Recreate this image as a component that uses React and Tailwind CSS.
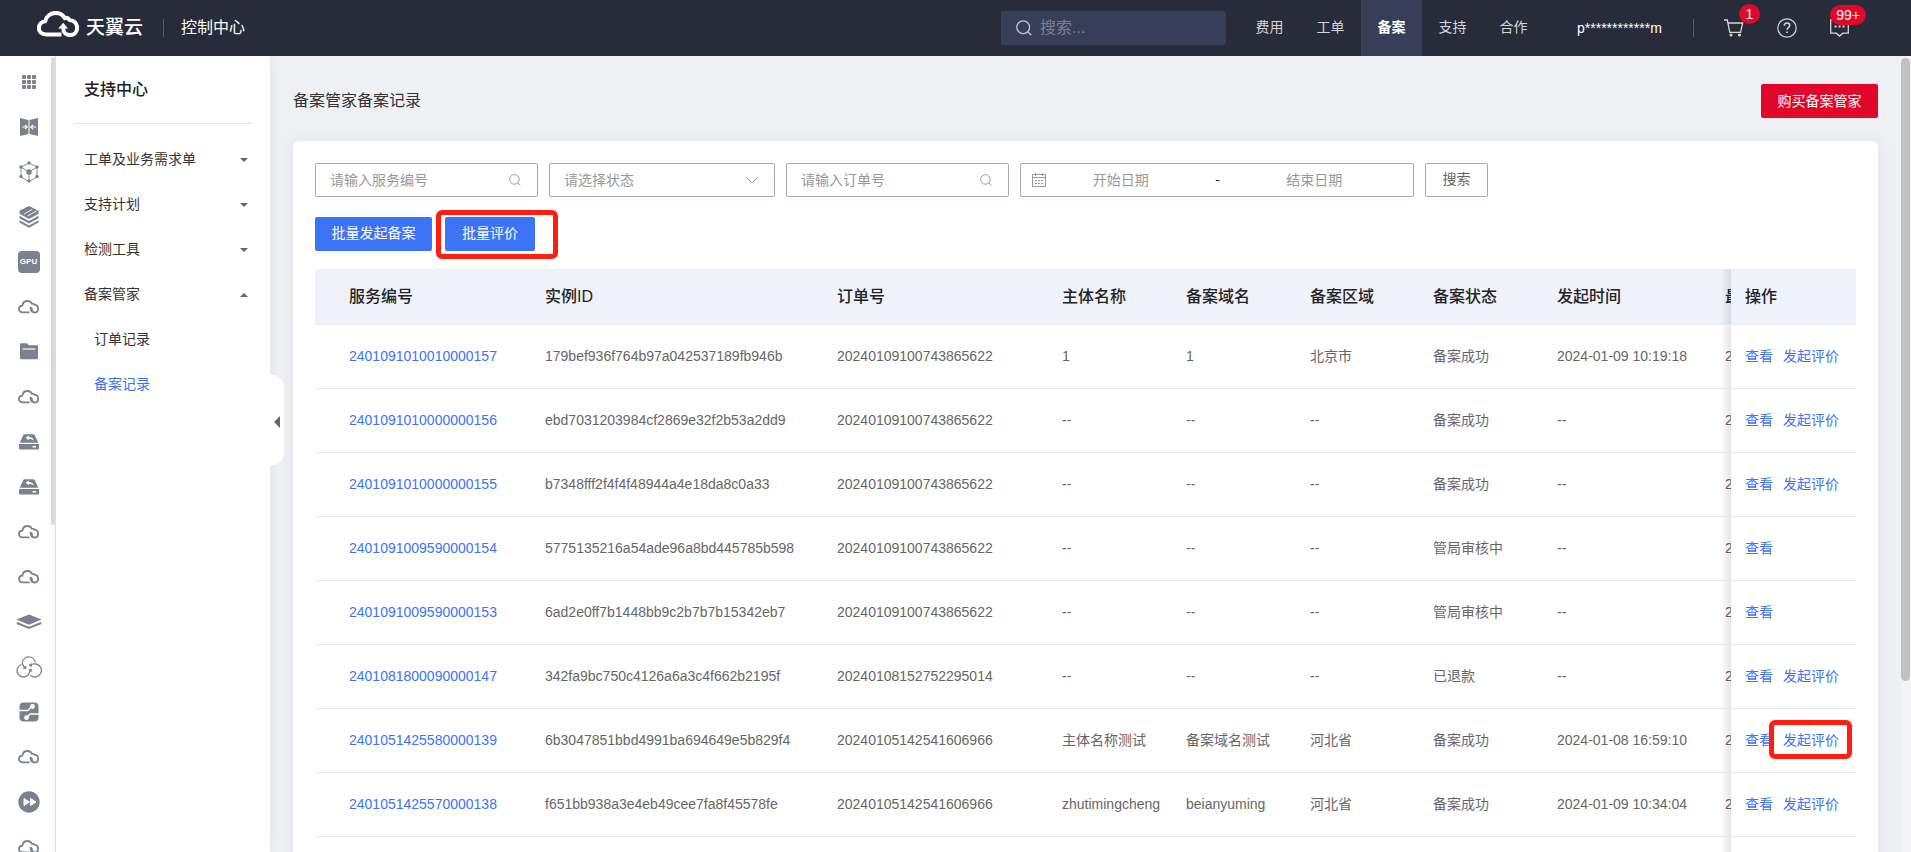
import React from "react";

const navItems = ["费用", "工单", "备案", "支持", "合作"];

const menuItems = ["工单及业务需求单", "支持计划", "检测工具"];

const columns = [
  { title: "服务编号", width: "w-[216px]", pad: "pl-[34px]" },
  { title: "实例ID", width: "w-[292px]", pad: "pl-3.5" },
  { title: "订单号", width: "w-[225px]", pad: "pl-3.5" },
  { title: "主体名称", width: "w-[124px]", pad: "pl-3.5" },
  { title: "备案域名", width: "w-[124px]", pad: "pl-3.5" },
  { title: "备案区域", width: "w-[123px]", pad: "pl-3.5" },
  { title: "备案状态", width: "w-[124px]", pad: "pl-3.5" },
  { title: "发起时间", width: "w-[168px]", pad: "pl-3.5" },
  { title: "最", width: "w-5", pad: "pl-3.5" },
];

const rows = [
  ["2401091010010000157", "179bef936f764b97a042537189fb946b", "20240109100743865622", "1", "1", "北京市", "备案成功", "2024-01-09 10:19:18", "2"],
  ["2401091010000000156", "ebd7031203984cf2869e32f2b53a2dd9", "20240109100743865622", "--", "--", "--", "备案成功", "--", "2"],
  ["2401091010000000155", "b7348fff2f4f4f48944a4e18da8c0a33", "20240109100743865622", "--", "--", "--", "备案成功", "--", "2"],
  ["2401091009590000154", "5775135216a54ade96a8bd445785b598", "20240109100743865622", "--", "--", "--", "管局审核中", "--", "2"],
  ["2401091009590000153", "6ad2e0ff7b1448bb9c2b7b7b15342eb7", "20240109100743865622", "--", "--", "--", "管局审核中", "--", "2"],
  ["2401081800090000147", "342fa9bc750c4126a6a3c4f662b2195f", "20240108152752295014", "--", "--", "--", "已退款", "--", "2"],
  ["2401051425580000139", "6b3047851bbd4991ba694649e5b829f4", "20240105142541606966", "主体名称测试", "备案域名测试", "河北省", "备案成功", "2024-01-08 16:59:10", "2"],
  ["2401051425570000138", "f651bb938a3e4eb49cee7fa8f45578fe", "20240105142541606966", "zhutimingcheng", "beianyuming", "河北省", "备案成功", "2024-01-09 10:34:04", "2"],
];

const CloudLogo = ({ className }) => (
  <svg viewBox="0 0 42 26" className={className} fill="none" aria-hidden="true">
    <path
      d="M24.5 23.4H9C4.7 23.4 1.9 20.6 1.9 17c0-3.8 2.7-6.4 6.3-6.8C9.3 5.3 13.6 1.9 18.8 1.9c4 0 7.200 1.900 9 5.300 1.300-.5 3.400-.3 4.700 1.700 4.700.4 7.600 3.600 7.600 7.900 0 4.200-3 7.300-7 7.300-4.400 0-6.900-3-6.900-6.900v-1"
      stroke="currentColor"
      strokeWidth="4"
      strokeLinejoin="round"
    />
    <path d="M26.200 11.800 31 17.600h-9.800z" fill="currentColor" />
  </svg>
);

const SmallCloud = () => (
  <svg width="21" height="14" viewBox="0 0 21 14" fill="none" aria-hidden="true">
    <path
      d="M11.600 12.300H4.600C2.400 12.300 1 10.800 1 9c0-2 1.500-3.300 3.300-3.400C4.800 2.900 6.800 1 9.400 1c2 0 3.600 1 4.400 2.700 1.600-.1 2.300.3 2.700 1 2.200.2 3.600 1.800 3.600 4 0 2.300-1.500 3.800-3.600 3.800-2.200 0-3.300-1.300-3.300-3.200"
      stroke="currentColor"
      strokeWidth="1.800"
    />
    <path d="M11.500 7.200c1.200-.6 2.600-.2 3 .8.300 1 .1 2 .9 3.200l-1.600 1c-1.400-1-2-2.700-2.300-5z" fill="currentColor" />
  </svg>
);

const GridIcon = () => (
  <svg width="14" height="14" viewBox="0 0 14 14" fill="currentColor" aria-hidden="true">
    {[0, 5, 10].map((y) =>
      [0, 5, 10].map((x) => <rect key={`${x}-${y}`} x={x} y={y} width="4" height="4" rx="1" />)
    )}
  </svg>
);

const DoorIcon = () => (
  <svg width="18" height="18" viewBox="0 0 18 18" aria-hidden="true">
    <path d="M0 0l8.500 2v14L0 18zM18 0L9.500 2v14l8.500 2z" fill="currentColor" />
    <path
      d="M2 9h5M5 6.800 7.200 9 5 11.200M16 9h-5M13 6.800 10.800 9l2.200 2.200"
      stroke="white"
      strokeWidth="1.200"
      fill="none"
    />
  </svg>
);

const CubeIcon = () => (
  <svg width="20" height="22" viewBox="0 0 20 22" aria-hidden="true">
    <path
      d="M10 2 18 6v10l-8 4.500L2 16V6zM2 6l8 5 8-5M10 11v9"
      stroke="currentColor"
      strokeWidth="0.900"
      fill="none"
    />
    <g fill="currentColor">
      <circle cx="10" cy="11" r="2.700" />
      <circle cx="10" cy="2" r="1.700" />
      <circle cx="10" cy="20" r="1.700" />
      <circle cx="2" cy="6" r="1.700" />
      <circle cx="18" cy="6" r="1.700" />
      <circle cx="2" cy="15.500" r="1.700" />
      <circle cx="18" cy="15.500" r="1.700" />
    </g>
  </svg>
);

const StackIcon = () => (
  <svg width="20" height="22" viewBox="0 0 20 22" aria-hidden="true">
    <path d="M10 0l9.500 4.800v3L10 13 .5 7.800v-3z" fill="currentColor" />
    <path d="M5 8l8-4.500M8.500 10l9-5" stroke="white" strokeWidth="0.900" />
    <path d="M.5 9.800l9.500 5.200 9.500-5.200v2.500L10 17.500.5 12.300zM.5 14.200l9.500 5.200 9.500-5.200v2.200L10 21.700.5 16.400z" fill="currentColor" />
  </svg>
);

const GpuIcon = () => (
  <span className="flex h-[22px] w-[22px] items-center justify-center rounded bg-[#7c818e] text-[8px] font-bold text-white">
    GPU
  </span>
);

const FolderIcon = () => (
  <svg width="18" height="17" viewBox="0 0 18 17" aria-hidden="true">
    <path d="M0 1.500C0 .7.500.3 1.200.3h5.600l2 2H17c.7 0 1 .4 1 1V15c0 .8-.4 1.200-1.100 1.200H1.100C.4 16.200 0 15.800 0 15z" fill="currentColor" />
    <path d="M2.500 6h13" stroke="white" strokeWidth="1.200" />
  </svg>
);

const DiskIcon = () => (
  <svg width="20" height="16" viewBox="0 0 20 16" aria-hidden="true">
    <path d="M4.200 1.200C4.500.5 5 .3 5.600.3h8.800c.6 0 1.100.2 1.400.9L19.300 8.700H.7z" fill="currentColor" />
    <path d="M0 10h20v4.200c0 .8-.5 1.300-1.300 1.300H1.300C.5 15.500 0 15 0 14.200z" fill="currentColor" />
    <path d="M6.500 3.800 10 1.600v1.300c2.800 0 4.300 1.200 4.800 3.600-1.200-1.200-2.600-1.700-4.800-1.600v1.400zM13.500 12h3.500v1.500h-3.500z" fill="white" />
  </svg>
);

const LayersIcon = () => (
  <svg width="26" height="16" viewBox="0 0 26 16" aria-hidden="true">
    <path d="M13 .5 25.500 5.500 13 10.800.5 5.500z" fill="currentColor" />
    <path d="M.8 9 13 14l12.200-5" stroke="currentColor" strokeWidth="2" fill="none" />
  </svg>
);

const LoopsIcon = () => (
  <svg width="26" height="22" viewBox="0 0 26 22" fill="none" stroke="currentColor" strokeWidth="1.300" aria-hidden="true">
    <path d="M19.200 6.500A6.500 6.500 0 0 0 6.300 6.800c0 2.200 1.200 3.700 3 5.400" />
    <path d="M5.500 8.500a6.400 6.400 0 1 0 6.800 10.300c1.200-1.600 1-3 2.300-4.600" />
    <path d="M13.500 9.300c2-1.500 4.500-1.500 6.500-1.300a6.600 6.600 0 1 1-5.500 11.500" />
    <path d="M7.200 12.600l3 .1-.4-2.900zM12.800 13.700l2.400-.9.400 2.800zM15.300 7.600 13 9.500l2.600 1.200z" fill="currentColor" strokeWidth="0.600" />
  </svg>
);

const CircuitIcon = () => (
  <svg width="20" height="20" viewBox="0 0 20 20" aria-hidden="true">
    <rect x=".5" y=".5" width="19" height="19" rx="4" fill="currentColor" />
    <path d="M0 8.500h8.500c2 0 2-4 5-4M20 12h-8.500c-2 0-2 4-4.500 4" stroke="white" strokeWidth="1.500" fill="none" />
    <circle cx="13.500" cy="4.500" r="2.400" fill="white" />
    <circle cx="7.500" cy="15.700" r="2.400" fill="white" />
  </svg>
);

const ForwardIcon = () => (
  <svg width="22" height="22" viewBox="0 0 22 22" aria-hidden="true">
    <circle cx="11" cy="11" r="10.700" fill="currentColor" />
    <path d="M6 7.500l5.500 3.500L6 14.500zM12.500 7.500 18 11l-5.500 3.500z" fill="white" stroke="white" strokeLinejoin="round" />
  </svg>
);

const railIcons = [
  GridIcon, DoorIcon, CubeIcon, StackIcon, GpuIcon, SmallCloud, FolderIcon, SmallCloud, DiskIcon,
  DiskIcon, SmallCloud, SmallCloud, LayersIcon, LoopsIcon, CircuitIcon, SmallCloud, ForwardIcon, SmallCloud,
];

const SearchIcon = ({ className }) => (
  <svg viewBox="0 0 16 16" className={className} fill="none" stroke="currentColor" strokeWidth="1.300" aria-hidden="true">
    <circle cx="7.200" cy="7.200" r="6.400" />
    <path d="M11.700 11.700 15.300 15.300" />
  </svg>
);

const Caret = ({ up }) => (
  <svg width="8" height="4" viewBox="0 0 8 4" className="mt-0.5 text-[#666]" aria-hidden="true">
    <path d={up ? "M0 4h8L4 0z" : "M0 0h8L4 4z"} fill="currentColor" />
  </svg>
);

const Header = () => (
  <header className="flex h-14 shrink-0 items-center bg-[#282b3a] pr-[45px] pl-[37px] text-sm text-[#d5d6da]">
    <a href="#home" className="flex items-center gap-[7px] text-white">
      <CloudLogo className="mb-2 h-[26px] w-[42px]" />
      <span className="text-[19px] leading-6 font-medium">天翼云</span>
    </a>
    <span className="ml-5 h-[18px] w-px bg-[#555866]" />
    <a href="#console" className="ml-[17px] text-base text-white">控制中心</a>

    <label className="ml-auto flex h-[34px] w-[225px] items-center gap-2 rounded-xs bg-[#363f57] px-[15px]">
      <SearchIcon className="h-4 w-4 shrink-0 text-[#c4c6cc]" />
      <input
        type="text"
        aria-label="搜索"
        placeholder="搜索..."
        className="w-full min-w-0 bg-transparent text-base outline-none placeholder:text-[#7b8090]"
      />
    </label>

    <nav className="ml-[13px] flex h-full">
      {navItems.map((item) => (
        <a
          key={item}
          href="#nav"
          className={`flex w-[61px] items-center justify-center pb-0.5 ${
            item === "备案" ? "bg-[#363f57] font-bold text-white" : ""
          }`}
        >
          {item}
        </a>
      ))}
    </nav>

    <button type="button" className="ml-[33px] w-[82px] whitespace-nowrap text-white">
      p************m
    </button>
    <span className="ml-[34px] h-[18px] w-px bg-[#555866]" />

    <button type="button" aria-label="购物车" className="relative ml-[30px]">
      <svg width="20" height="18" viewBox="0 0 20 18" fill="none" stroke="currentColor" strokeWidth="1.300" aria-hidden="true">
        <path d="M0 1h3.300l2.500 12.300h10.700L18.700 4H4" />
        <circle cx="7" cy="16" r="0.900" fill="currentColor" />
        <circle cx="15.500" cy="16" r="0.900" fill="currentColor" />
      </svg>
      <span className="absolute -top-[15px] left-[15px] flex h-5 w-[21px] items-center justify-center rounded-full bg-[#e0072a] text-sm text-white">
        1
      </span>
    </button>
    <button type="button" aria-label="帮助" className="ml-[33px]">
      <svg width="20" height="20" viewBox="0 0 20 20" fill="none" stroke="currentColor" strokeWidth="1.200" aria-hidden="true">
        <circle cx="10" cy="10" r="9.200" />
        <path d="M7.300 7.800c0-1.700 1.200-2.800 2.700-2.800s2.700 1 2.700 2.500c0 2-2.700 2.200-2.700 4.300" strokeWidth="1.500" />
        <path d="M10 13.500v1.600" strokeWidth="1.600" />
      </svg>
    </button>
    <button type="button" aria-label="消息" className="relative mr-[17px] ml-[33px]">
      <svg width="19" height="18" viewBox="0 0 19 18" fill="none" stroke="currentColor" strokeWidth="1.300" aria-hidden="true">
        <path d="M.7.7h17.600v13.500h-5.500l-3.300 2.900-3.300-2.900H.7z" />
        <path d="M4.500 7.500h2M8.500 7.500h2M12.500 7.500h2" strokeWidth="1.800" />
      </svg>
      <span className="absolute -top-[14px] left-0 flex h-5 w-9 items-center justify-center rounded-full bg-[#e0072a] text-sm text-white">
        99+
      </span>
    </button>
  </header>
);

const IconRail = () => (
  <nav aria-label="产品" className="relative w-14 shrink-0 overflow-hidden border-r border-[#dfe1ea] bg-white pt-[3px] pl-0.5">
    {railIcons.map((Icon, i) => (
      <a key={i} href="#product" className="flex h-[45px] items-center justify-center text-[#7c818e]">
        <Icon />
      </a>
    ))}
    <span className="absolute top-px right-0 h-[468px] w-1 rounded-full bg-[#dcdcdc]" />
  </nav>
);

const Sidebar = () => (
  <aside className="relative z-10 w-[214px] shrink-0 bg-white px-[18px] text-sm text-[#333] shadow-[2px_0_12px_rgba(40,60,100,0.06)]">
    <h2 className="flex h-[68px] items-center border-b border-[#dfe1ea] pl-2.5 text-base font-medium text-[#222]">
      支持中心
    </h2>
    <div className="pt-3">
      {menuItems.map((item) => (
        <button key={item} type="button" className="flex h-[45px] w-full items-center justify-between pr-1 pl-2.5">
          {item}
          <Caret />
        </button>
      ))}
      <button type="button" className="flex h-[45px] w-full items-center justify-between pr-1 pl-2.5">
        备案管家
        <Caret up />
      </button>
      <a href="#orders" className="flex h-[45px] items-center pl-5">订单记录</a>
      <a href="#records" className="flex h-[45px] items-center pl-5 text-[#3d73f5]">备案记录</a>
    </div>
    <button
      type="button"
      aria-label="收起菜单"
      className="absolute top-[319px] left-full flex h-[90px] w-3.5 items-center justify-center rounded-r-xl bg-white pt-1"
    >
      <svg width="6" height="12" viewBox="0 0 6 12" aria-hidden="true">
        <path d="M6 0v12L0 6z" fill="#666" />
      </svg>
    </button>
  </aside>
);

const SearchField = ({ placeholder }) => (
  <label className="flex h-[34px] w-[223px] items-center rounded-xs border border-[#a5a9b5] pr-4 pl-3.5">
    <input
      type="text"
      aria-label={placeholder}
      placeholder={placeholder}
      className="min-w-0 flex-1 outline-none placeholder:text-[#999]"
    />
    <SearchIcon className="h-3 w-3 shrink-0 text-[#999]" />
  </label>
);

const Filters = () => (
  <form className="flex flex-wrap gap-[11px] text-sm text-[#666]">
    <SearchField placeholder="请输入服务编号" />
    <div className="relative">
      <select
        aria-label="状态"
        className="h-[34px] w-[226px] appearance-none rounded-xs border border-[#a5a9b5] bg-white px-3.5 text-[#999] outline-none"
      >
        <option>请选择状态</option>
      </select>
      <svg width="12" height="7" viewBox="0 0 12 7" className="pointer-events-none absolute top-3.5 right-[17px]" aria-hidden="true">
        <path d="M.5.5 6 6l5.500-5.500" fill="none" stroke="#999" />
      </svg>
    </div>
    <SearchField placeholder="请输入订单号" />
    <div className="flex h-[34px] w-[394px] items-center rounded-xs border border-[#a5a9b5] pr-6 pl-[11px]">
      <svg width="14" height="14" viewBox="0 0 14 14" fill="none" stroke="#999" aria-hidden="true">
        <path d="M.5 1.500h13v12H.5zM.5 4.500h13M3.500 0v3M10.500 0v3" />
        <path d="M3 7.500h2M6 7.500h2M9 7.500h2M3 10.500h2M6 10.500h2M9 10.500h2" />
      </svg>
      <input type="text" aria-label="开始日期" placeholder="开始日期" className="min-w-0 flex-1 text-center outline-none placeholder:text-[#999]" />
      <span className="w-11 text-center text-[#333]">-</span>
      <input type="text" aria-label="结束日期" placeholder="结束日期" className="min-w-0 flex-1 text-center outline-none placeholder:text-[#999]" />
    </div>
    <button type="submit" className="h-[34px] w-[63px] rounded-xs border border-[#a5a9b5] pb-0.5">
      搜索
    </button>
  </form>
);

const stickyCell =
  "sticky right-0 border-b border-[#e8ebf5] pl-3.5 text-left before:absolute before:inset-y-0 before:-left-2.5 before:w-2.5 before:bg-linear-to-l before:from-black/10 before:to-transparent";

const RecordTable = () => (
  <div className="mt-[18px] overflow-x-auto">
    <table className="w-full min-w-[1541px] table-fixed border-separate border-spacing-0 text-sm whitespace-nowrap text-[#666]">
      <thead>
        <tr className="h-14 text-base text-[#222]">
          {columns.map((col) => (
            <th
              key={col.title}
              className={`overflow-hidden border-b border-[#e8ebf5] bg-[#eff2fb] text-left font-medium ${col.width} ${col.pad}`}
            >
              {col.title}
            </th>
          ))}
          <th className={`w-[125px] bg-[#eff2fb] font-medium ${stickyCell}`}>操作</th>
        </tr>
      </thead>
      <tbody>
        {rows.map((row) => {
          const reviewable = row[6] !== "管局审核中";
          return (
            <tr key={row[0]} className="h-16">
              {row.map((value, i) => (
                <td key={i} className={`overflow-hidden border-b border-[#e8ebf5] pb-0.5 ${columns[i].pad}`}>
                  {i === 0 ? (
                    <a href="#detail" className="text-[#3d73f5]">{value}</a>
                  ) : (
                    value
                  )}
                </td>
              ))}
              <td className={`bg-white pb-0.5 text-[#3d73f5] ${stickyCell}`}>
                <a href="#view">查看</a>
                {reviewable && (
                  <span className="relative ml-2.5 inline-block">
                    <a href="#review">发起评价</a>
                    {row[0] === "2401051425580000139" && (
                      <span className="pointer-events-none absolute -top-2.5 -left-3.5 h-[39px] w-[83px] rounded-md border-[5px] border-[#ff1f10]" />
                    )}
                  </span>
                )}
              </td>
            </tr>
          );
        })}
        <tr className="h-16">
          <td colSpan={9} className="border-b border-[#e8ebf5]" />
          <td className={`bg-white ${stickyCell}`} />
        </tr>
      </tbody>
    </table>
  </div>
);

const App = () => {
  return (
    <div className="flex h-screen flex-col overflow-hidden bg-[#eff0f4] font-['Liberation_Sans','Noto_Sans_CJK_SC',sans-serif]">
      <Header />
      <div className="flex min-h-0 flex-1">
        <IconRail />
        <Sidebar />
        <main className="relative min-w-0 flex-1 overflow-hidden pr-[33px] pl-[23px]">
          <div className="flex items-center justify-between pt-7 pb-[23px]">
            <h1 className="text-base text-[#333]">备案管家备案记录</h1>
            <button type="button" className="h-[34px] w-[117px] rounded-xs bg-[#e0072a] text-sm text-white">
              购买备案管家
            </button>
          </div>
          <section className="rounded-md bg-white p-[22px] shadow-[0_0_16px_rgba(40,60,100,0.08)]">
            <Filters />
            <div className="mt-5 flex gap-[13px] text-sm text-white">
              <button type="button" className="h-[34px] w-[117px] rounded-xs bg-[#3d73f5] pb-0.5">
                批量发起备案
              </button>
              <div className="relative">
                <button type="button" className="h-[34px] w-[90px] rounded-xs bg-[#3d73f5] pb-0.5">
                  批量评价
                </button>
                <span className="pointer-events-none absolute -top-[7px] -left-[9px] h-[49px] w-[122px] rounded-md border-[5px] border-[#ff1f10]" />
              </div>
            </div>
            <RecordTable />
          </section>
          <div className="absolute inset-y-0 right-0 w-2.5 bg-[#f3f3f5]">
            <div className="mt-0.5 h-[623px] w-[9px] rounded-full bg-[#c1c1c1]" />
          </div>
        </main>
      </div>
    </div>
  );
};

export default App;
